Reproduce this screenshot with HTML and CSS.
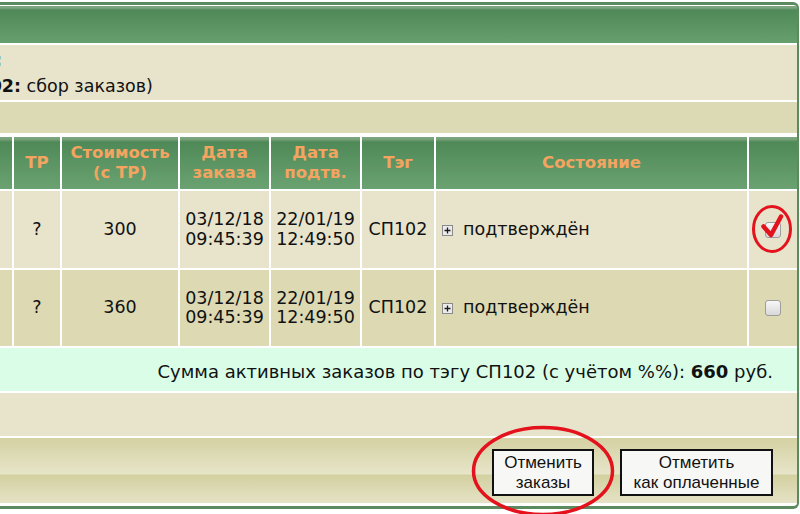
FILE: index.html
```html
<!DOCTYPE html>
<html lang="ru">
<head>
<meta charset="utf-8">
<title>Заказы</title>
<link rel="stylesheet" href="styles.css">
</head>
<body>
<div class="page">
  <div class="panel">
    <div class="panel-head"></div>
    <div class="info">
      <div class="info-line"><span class="lead lead1">Закупка:</span></div>
      <div class="info-line"><span class="lead lead2">(<b>СП102</b></span><b>:</b> сбор заказов)</div>
    </div>
    <div class="bar"></div>
    <table class="orders">
      <colgroup>
        <col class="w0"><col class="w1"><col class="w2"><col class="w3"><col class="w4"><col class="w5"><col class="w6"><col class="w7">
      </colgroup>
      <thead>
        <tr>
          <th></th>
          <th>ТР</th>
          <th>Стоимость<br>(с ТР)</th>
          <th>Дата<br>заказа</th>
          <th>Дата<br>подтв.</th>
          <th>Тэг</th>
          <th>Состояние</th>
          <th></th>
        </tr>
      </thead>
      <tbody>
        <tr class="r1">
          <td></td>
          <td>?</td>
          <td>300</td>
          <td>03/12/18<br>09:45:39</td>
          <td>22/01/19<br>12:49:50</td>
          <td>СП102</td>
          <td class="state"><svg class="plus" width="11" height="11" viewBox="0 0 11 11"><rect x="0.5" y="0.5" width="10" height="10" fill="#ececec" stroke="#8a8a8a"/><path d="M2.5 5.5h6M5.5 2.5v6" stroke="#1a1a1a" stroke-width="1.3"/></svg>подтверждён</td>
          <td class="chk"><input type="checkbox" class="cb" checked></td>
        </tr>
        <tr class="r2">
          <td></td>
          <td>?</td>
          <td>360</td>
          <td>03/12/18<br>09:45:39</td>
          <td>22/01/19<br>12:49:50</td>
          <td>СП102</td>
          <td class="state"><svg class="plus" width="11" height="11" viewBox="0 0 11 11"><rect x="0.5" y="0.5" width="10" height="10" fill="#ececec" stroke="#8a8a8a"/><path d="M2.5 5.5h6M5.5 2.5v6" stroke="#1a1a1a" stroke-width="1.3"/></svg>подтверждён</td>
          <td class="chk"><input type="checkbox" class="cb"></td>
        </tr>
      </tbody>
    </table>
    <div class="sum">Сумма активных заказов по тэгу СП102 (с учётом %%):&nbsp;<b>660</b>&nbsp;руб.</div>
    <div class="blank"></div>
    <div class="footer">
      <button class="btn btn-cancel" type="button">Отменить<br>заказы</button>
      <button class="btn btn-paid" type="button">Отметить<br>как оплаченные</button>
    </div>
  </div>
</div>
<svg class="marks" width="800" height="514" viewBox="0 0 800 514">
  <ellipse cx="772" cy="229" rx="18.5" ry="22.5" fill="none" stroke="#e3121c" stroke-width="3"/>
  <path d="M763.5 226.5 L771 235 L781 216.5" fill="none" stroke="#e3121c" stroke-width="4.5" stroke-linecap="round" stroke-linejoin="round"/>
  <ellipse cx="543" cy="471" rx="69.5" ry="43.5" fill="none" stroke="#e3121c" stroke-width="3.5"/>
</svg>
</body>
</html>
```
FILE: styles.css
```css
* { box-sizing: border-box; }

html, body {
  margin: 0;
  padding: 0;
  background: #fff;
}

body {
  width: 800px;
  height: 514px;
  overflow: hidden;
  position: relative;
  font-family: "DejaVu Sans", Verdana, sans-serif;
  font-size: 17.5px;
  color: #111;
}

.page {
  padding-top: 2px;
}

.panel {
  margin-left: -200px;
  width: 999px;
  border: 3px solid #5b8a5f;
  border-left: 0;
  border-right-width: 2px;
  border-radius: 0 6px 6px 0;
  padding: 1px 0 3px;
  background: #fff;
  display: flex;
  flex-direction: column;
  gap: 2px;
}

.panel-head {
  height: 37px;
  background: linear-gradient(#7ca57f 0, #7ca57f 2px, #4f8957 4px, #67a06e 100%);
}

.info {
  height: 55px;
  background: #e7e4cb;
  padding-top: 2px;
  line-height: 26px;
  white-space: nowrap;
}

.lead {
  display: inline-block;
  text-align: right;
}

.lead1 { width: 202px; font-weight: bold; }
.lead2 { width: 214px; }

.bar {
  height: 31px;
  background: #dcdab4;
}

.orders {
  width: 999px;
  margin: 0 -2px -2px 0;
  border-collapse: separate;
  border-spacing: 2px;
  table-layout: fixed;
}

.w0 { width: 210px; }
.w1 { width: 46px; }
.w2 { width: 116px; }
.w3 { width: 89px; }
.w4 { width: 89px; }
.w5 { width: 72px; }
.w6 { width: 311px; }
.w7 { width: 48px; }

.orders th {
  height: 52px;
  padding: 0 2px;
  font-size: 16.5px;
  line-height: 20px;
  color: #f4a460;
  font-weight: bold;
  text-align: center;
  vertical-align: middle;
  background: linear-gradient(#7ca57f 0, #7ca57f 2px, #4f8957 5px, #6aa371 100%);
}

.orders td {
  padding: 0 2px;
  line-height: 19.5px;
  text-align: center;
  vertical-align: middle;
  white-space: nowrap;
}

.r1 td { height: 77px; background: #e7e4cb; }
.r2 td { height: 76px; background: #dcd9b3; }

.orders td.state {
  text-align: left;
  padding-left: 6px;
}

.plus {
  vertical-align: -1px;
  margin-right: 10px;
}

.cb {
  appearance: none;
  -webkit-appearance: none;
  display: inline-block;
  width: 16px;
  height: 16px;
  margin: 0;
  border: 1px solid #9d9d9d;
  border-radius: 3px;
  background: linear-gradient(#f7f7f7, #d8d8d8);
  vertical-align: middle;
}

.sum {
  height: 43px;
  background: #dafde8;
  display: flex;
  align-items: center;
  justify-content: flex-end;
  padding: 3px 24px 0 0;
  font-size: 18px;
  white-space: nowrap;
}

.blank {
  height: 43px;
  background: #e7e4cb;
}

.footer {
  height: 65px;
  display: flex;
  justify-content: flex-end;
  align-items: flex-start;
  gap: 26px;
  padding: 11px 24px 0 0;
  background: linear-gradient(#d4d1a2 0, #e7e5c9 36px, #d3d0a0 37px, #e5e3c6 65px);
}

.btn {
  height: 47px;
  padding: 0;
  border: 2px solid #111;
  border-radius: 0;
  background: #f7f7f5;
  color: #111;
  font-family: "Liberation Sans", Arial, sans-serif;
  font-size: 17px;
  line-height: 20px;
}

.btn-cancel { width: 102px; }
.btn-paid { width: 153px; }

.marks {
  position: absolute;
  left: 0;
  top: 0;
  pointer-events: none;
}
```
